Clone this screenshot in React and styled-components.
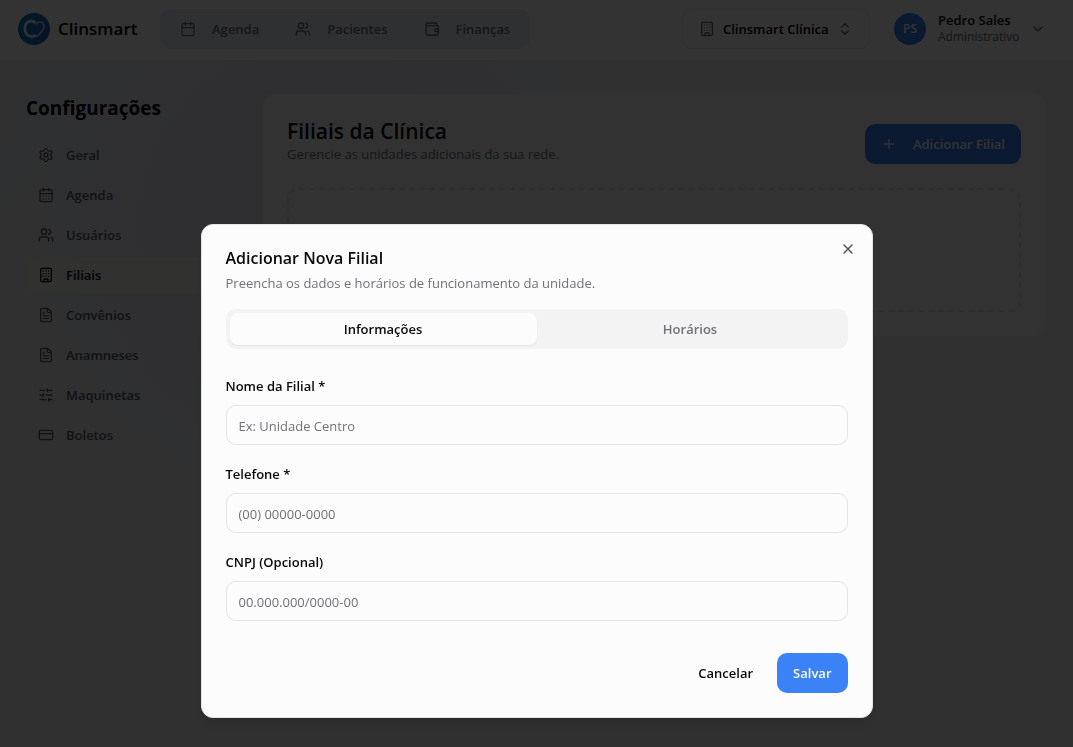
import React, { useState } from 'react'
import styled, { createGlobalStyle } from 'styled-components'
import {
  Building,
  Calendar,
  CalendarDays,
  ChevronDown,
  ChevronsUpDown,
  CreditCard,
  FileText,
  Plus,
  Settings,
  SlidersHorizontal,
  Users,
  Wallet,
  X
} from 'lucide-react'

const GlobalStyle = createGlobalStyle`
  * {
    box-sizing: border-box;
  }
  body {
    margin: 0;
    color: #09090b;
    font-family: 'Segoe UI', 'Open Sans', 'Noto Sans', sans-serif;
    font-size: 13px;
    line-height: 20px;
    background: #f5f5f7;
  }
  button, input {
    font: inherit;
    color: inherit;
  }
  button {
    border: 0;
    padding: 0;
    background: none;
    cursor: pointer;
  }
  h1, h2, p {
    margin: 0;
  }
  a {
    color: inherit;
    text-decoration: none;
  }
  svg {
    flex-shrink: 0;
  }
`

const Page = styled.div`
  min-height: 100vh;
  background: radial-gradient(
      circle at 30% 30%,
      rgba(99, 102, 241, 0.06),
      transparent 400px
    ),
    linear-gradient(135deg, #eef1f2, #f0f0f4 50%, #f0f0f2);
`

const Header = styled.header`
  display: flex;
  align-items: center;
  height: 61px;
  padding: 0 27px 2px 18px;
  background: #fbfcfb;
  border-bottom: 1px solid #f1f1f3;
`

const Brand = styled.a`
  display: flex;
  align-items: center;
  gap: 8px;
  width: 142px;
  font-size: 17px;
  font-weight: 600;
`

const Nav = styled.nav`
  display: flex;
  gap: 4px;
  height: 40px;
  padding: 4px;
  border-radius: 12px;
  background: #eceef2;
`

const NavLink = styled.a`
  display: flex;
  align-items: center;
  gap: 16px;
  padding: 0 16px;
  font-weight: 600;
  color: #71717a;
`

const ClinicPicker = styled.button`
  display: flex;
  align-items: center;
  gap: 8px;
  width: 188px;
  height: 40px;
  margin-left: auto;
  padding: 0 16px;
  border: 1px solid #ededf0;
  border-radius: 10px;
  font-weight: 600;
  white-space: nowrap;
  & svg {
    color: #71717a;
  }
`

const UserMenu = styled.button`
  display: flex;
  align-items: center;
  gap: 12px;
  margin-left: 24px;
  text-align: left;
`

const Avatar = styled.span`
  display: flex;
  align-items: center;
  justify-content: center;
  width: 32px;
  height: 32px;
  border-radius: 50%;
  font-size: 12px;
  font-weight: 600;
  color: #f8fafc;
  background: #3b82f6;
`

const UserText = styled.span`
  display: flex;
  flex-direction: column;
  width: 80px;
  line-height: 16px;
  font-weight: 600;
  & small {
    font-size: 12px;
    font-weight: 400;
    line-height: 18px;
    color: #71717a;
  }
`

const Main = styled.main`
  display: grid;
  grid-template-columns: 213px 1fr;
  align-items: start;
  gap: 24px;
  padding: 33px 28px 33px 26px;
`

const SideTitle = styled.h1`
  margin-bottom: 15px;
  font-size: 19px;
  font-weight: 700;
  line-height: 28px;
`

const SideNav = styled.nav`
  display: flex;
  flex-direction: column;
  gap: 4px;
`

const SideLink = styled.a`
  display: flex;
  align-items: center;
  gap: 12px;
  height: 36px;
  padding: 0 12px;
  border-radius: 10px;
  font-weight: 600;
  color: ${props => (props.$active ? '#09090b' : '#5c5c66')};
  background: ${props => (props.$active ? '#f3f2f0' : 'transparent')};
`

const Card = styled.section`
  padding: 24px;
  border-radius: 12px;
  background: #fbfbfb;
`

const CardHeader = styled.div`
  display: flex;
  align-items: flex-end;
  justify-content: space-between;
  margin-bottom: 24px;
`

const CardTitle = styled.h2`
  font-size: 21px;
  font-weight: 600;
  line-height: 26px;
`

const Muted = styled.p`
  color: #71717a;
`

const Button = styled.button`
  display: flex;
  align-items: center;
  gap: 16px;
  height: 40px;
  padding: 0 16px;
  border-radius: 10px;
  font-weight: 600;
  color: ${props => (props.$primary ? '#f8fafc' : '#09090b')};
  background: ${props => (props.$primary ? '#3b82f6' : 'transparent')};
`

const EmptyBox = styled.div`
  height: 124px;
  border: 2px dashed #e6e6ea;
  border-radius: 12px;
`

const Overlay = styled.div`
  position: fixed;
  inset: 0;
  display: flex;
  align-items: flex-start;
  justify-content: center;
  padding-top: 224px;
  overflow: auto;
  background: rgba(0, 0, 0, 0.8);
`

const Dialog = styled.form`
  position: relative;
  width: 100%;
  max-width: 672px;
  padding: 24px;
  border: 1px solid #e4e4e7;
  border-radius: 12px;
  background: #fcfcfc;
  box-shadow: 0 10px 15px -3px rgba(0, 0, 0, 0.1),
    0 4px 6px -4px rgba(0, 0, 0, 0.1);
`

const DialogTitle = styled.h2`
  margin-bottom: 6px;
  font-size: 16px;
  font-weight: 600;
  line-height: 18px;
`

const CloseButton = styled.button`
  position: absolute;
  top: 16px;
  right: 16px;
  display: flex;
  color: #52525b;
`

const Tabs = styled.div`
  display: grid;
  grid-template-columns: 1fr 1fr;
  height: 40px;
  margin: 16px 0 30px;
  padding: 4px;
  border-radius: 10px;
  background: #f3f3f3;
`

const Tab = styled.button`
  border-radius: 8px;
  font-weight: 600;
  color: ${props => (props.$active ? '#09090b' : '#71717a')};
  background: ${props => (props.$active ? '#fcfcfc' : 'transparent')};
  box-shadow: ${props =>
    props.$active ? '0 1px 2px rgba(0, 0, 0, 0.06)' : 'none'};
`

const Fields = styled.div`
  display: flex;
  flex-direction: column;
  gap: 22px;
`

const Field = styled.div`
  display: flex;
  flex-direction: column;
  gap: 12px;
  & label {
    line-height: 14px;
    font-weight: 600;
  }
  & input {
    width: 100%;
    height: 40px;
    padding: 2px 12px 0;
    border: 1px solid #e4e4e7;
    border-radius: 10px;
    background: transparent;
  }
  & input::placeholder {
    color: #71717a;
    opacity: 1;
  }
`

const Footer = styled.div`
  display: flex;
  justify-content: flex-end;
  gap: 8px;
  margin-top: 32px;
`

const navItems = [
  { label: 'Agenda', icon: Calendar },
  { label: 'Pacientes', icon: Users },
  { label: 'Finanças', icon: Wallet }
]

const sideItems = [
  { label: 'Geral', icon: Settings },
  { label: 'Agenda', icon: CalendarDays },
  { label: 'Usuários', icon: Users },
  { label: 'Filiais', icon: Building },
  { label: 'Convênios', icon: FileText },
  { label: 'Anamneses', icon: FileText },
  { label: 'Maquinetas', icon: SlidersHorizontal },
  { label: 'Boletos', icon: CreditCard }
]

const fields = [
  { id: 'nome', label: 'Nome da Filial *', placeholder: 'Ex: Unidade Centro' },
  { id: 'telefone', label: 'Telefone *', placeholder: '(00) 00000-0000' },
  { id: 'cnpj', label: 'CNPJ (Opcional)', placeholder: '00.000.000/0000-00' }
]

const Logo = () => (
  <svg width="32" height="32" viewBox="0 0 32 32" fill="none">
    <defs>
      <linearGradient id="logo" x1="0" y1="0" x2="1" y2="0">
        <stop offset="0" stopColor="#0f7cc0" />
        <stop offset="1" stopColor="#1d66c4" />
      </linearGradient>
    </defs>
    <circle cx="16" cy="16" r="16" fill="url(#logo)" />
    <path
      d="M17.6 10C16.2 8.6 14.6 8 12.8 8C9.2 8 6.9 11.3 6.9 15.6C6.9 20.4 9.8 23.6 13.6 23.6C15.2 23.6 16.8 23.1 18 22.2"
      stroke="#e4eefa"
      strokeWidth="2.8"
    />
    <path
      d="M18.4 11C20 8.6 22.8 8.2 24.5 9.8C26.8 12 26 15.4 23.8 18.4C22.4 20.4 20.8 21.8 19 23.4"
      stroke="#e4eefa"
      strokeWidth="1.4"
      strokeLinecap="round"
    />
  </svg>
)

const App = () => {
  const [tab, setTab] = useState('Informações')

  return (
    <Page>
      <GlobalStyle />
      <Header>
        <Brand href="#">
          <Logo />
          Clinsmart
        </Brand>
        <Nav>
          {navItems.map(({ label, icon: Icon }) => (
            <NavLink href="#" key={label}>
              <Icon size={16} />
              {label}
            </NavLink>
          ))}
        </Nav>
        <ClinicPicker type="button">
          <Building size={16} />
          Clinsmart Clínica
          <ChevronsUpDown size={16} />
        </ClinicPicker>
        <UserMenu type="button">
          <Avatar>PS</Avatar>
          <UserText>
            Pedro Sales
            <small>Administrativo</small>
          </UserText>
          <ChevronDown size={16} color="#71717a" />
        </UserMenu>
      </Header>

      <Main>
        <aside>
          <SideTitle>Configurações</SideTitle>
          <SideNav>
            {sideItems.map(({ label, icon: Icon }) => (
              <SideLink href="#" key={label} $active={label === 'Filiais'}>
                <Icon size={16} />
                {label}
              </SideLink>
            ))}
          </SideNav>
        </aside>
        <Card>
          <CardHeader>
            <div>
              <CardTitle>Filiais da Clínica</CardTitle>
              <Muted>Gerencie as unidades adicionais da sua rede.</Muted>
            </div>
            <Button type="button" $primary>
              <Plus size={16} />
              Adicionar Filial
            </Button>
          </CardHeader>
          <EmptyBox />
        </Card>
      </Main>

      <Overlay>
        <Dialog
          role="dialog"
          aria-labelledby="dialog-title"
          onSubmit={e => e.preventDefault()}
        >
          <DialogTitle id="dialog-title">Adicionar Nova Filial</DialogTitle>
          <Muted>
            Preencha os dados e horários de funcionamento da unidade.
          </Muted>
          <CloseButton type="button" aria-label="Fechar">
            <X size={16} />
          </CloseButton>
          <Tabs role="tablist">
            {['Informações', 'Horários'].map(name => (
              <Tab
                type="button"
                role="tab"
                key={name}
                aria-selected={tab === name}
                $active={tab === name}
                onClick={() => setTab(name)}
              >
                {name}
              </Tab>
            ))}
          </Tabs>
          <Fields>
            {fields.map(field => (
              <Field key={field.id}>
                <label htmlFor={field.id}>{field.label}</label>
                <input id={field.id} placeholder={field.placeholder} />
              </Field>
            ))}
          </Fields>
          <Footer>
            <Button type="button">Cancelar</Button>
            <Button type="submit" $primary>
              Salvar
            </Button>
          </Footer>
        </Dialog>
      </Overlay>
    </Page>
  )
}

export default App
